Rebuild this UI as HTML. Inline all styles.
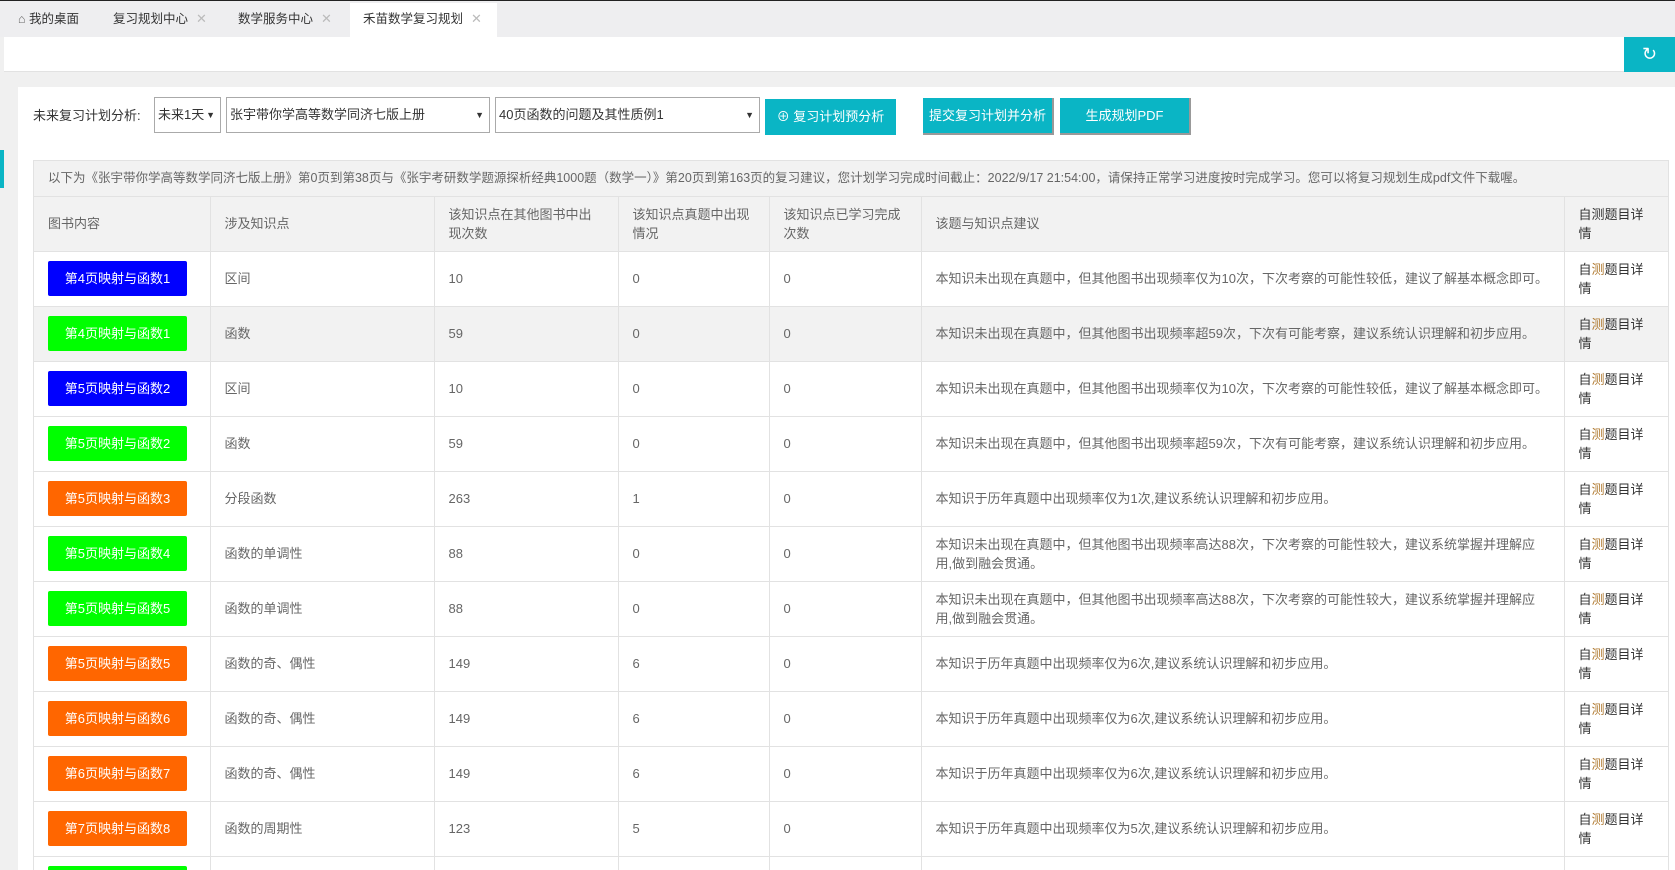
<!DOCTYPE html>
<html style="height:870px;overflow:hidden"><head><meta charset="utf-8"><style>
*{box-sizing:border-box;margin:0;padding:0}
body{width:1675px;height:870px;overflow:hidden;background:#f0f0f0;font-family:"Liberation Sans","Noto Sans CJK SC",sans-serif;font-size:13px;color:#333;position:relative}
.topline{position:absolute;left:0;top:0;width:1675px;height:1px;background:#222}
.tabs{position:absolute;top:1px;left:0;width:1675px;height:36px;background:#eeeef0}
.tab{position:absolute;top:2px;height:34px;line-height:32px;font-size:12.5px;color:#333}
.tab .x{color:#bbb;margin-left:8px;font-size:13px}
.tab.act{background:#fff}
.bar{position:absolute;top:37px;left:4px;width:1671px;height:35px;background:#fff;border-bottom:1px solid #e2e2e2}
.refresh{position:absolute;top:37px;left:1624px;width:51px;height:35px;background:#0ab5c5;color:#fff;text-align:center;line-height:35px;font-size:18px}
.panel{position:absolute;left:18px;top:87px;width:1657px;height:783px;background:#fff}
.lbl{position:absolute;left:33px;top:106px;font-size:13px;line-height:20px}
.sel{position:absolute;top:97px;height:36px;border:1px solid #aaa;background:#fff;line-height:34px;padding-left:3px;font-size:13px}
.sel:after{content:"▼";position:absolute;right:5px;top:0;font-size:9px}
.btn{position:absolute;top:99px;height:36px;background:#0ab5c5;color:#fff;text-align:center;line-height:36px;font-size:13px}
.btn.b{border-right:2px solid #999;border-bottom:2px solid #999;top:98px;height:37px}
.side{position:absolute;left:0;top:150px;width:4px;height:38px;background:#0ab5c5}
.tbl{position:absolute;left:33px;top:160px;width:1636px;height:710px;overflow:hidden;border:1px solid #e2e2e2;border-bottom:none}
.info{height:36px;background:#f2f2f2;line-height:35px;padding-left:14px;color:#666;font-size:12.5px;border-bottom:1px solid #e2e2e2;white-space:nowrap;overflow:hidden}
table{border-collapse:collapse;table-layout:fixed;width:1635px}
td{border-right:1px solid #e2e2e2;border-bottom:1px solid #e2e2e2;padding:0 14px;color:#666;vertical-align:middle;line-height:19px;height:55px}
td:last-child{border-right:none;color:#333}
tr.h td{background:#f2f2f2;height:54px}
tr.s td{background:#f2f2f2}
.pb{display:block;width:139px;height:35px;line-height:35px;text-align:center;color:#fff;border-radius:2px;font-size:13px}
.bl{background:#0000ff}.gr{background:#00ff00}.or{background:#ff6600}
.c{color:#b07a30}
</style></head><body>
<div class="topline"></div>
<div class="tabs">
<div class="tab" style="left:18px;width:90px"><span style="color:#666">⌂</span> 我的桌面</div>
<div class="tab" style="left:113px">复习规划中心<span class="x">✕</span></div>
<div class="tab" style="left:238px">数学服务中心<span class="x">✕</span></div>
<div class="tab act" style="left:350px;width:147px;padding-left:13px">禾苗数学复习规划<span class="x">✕</span></div>
</div>
<div class="bar"></div>
<div class="refresh">↻</div>
<div class="panel"></div>
<div class="side"></div>
<div class="lbl">未来复习计划分析:</div>
<div class="sel" style="left:154px;width:67px">未来1天</div>
<div class="sel" style="left:226px;width:264px">张宇带你学高等数学同济七版上册</div>
<div class="sel" style="left:495px;width:265px">40页函数的问题及其性质例1</div>
<div class="btn" style="left:765px;width:131px">⊕ 复习计划预分析</div>
<div class="btn b" style="left:923px;width:131px">提交复习计划并分析</div>
<div class="btn b" style="left:1060px;width:131px">生成规划PDF</div>
<div class="tbl">
<div class="info">以下为《张宇带你学高等数学同济七版上册》第0页到第38页与《张宇考研数学题源探析经典1000题（数学一）》第20页到第163页的复习建议，您计划学习完成时间截止：2022/9/17 21:54:00，请保持正常学习进度按时完成学习。您可以将复习规划生成pdf文件下载喔。</div>
<table>
<colgroup><col style="width:176px"><col style="width:224px"><col style="width:184px"><col style="width:151px"><col style="width:152px"><col style="width:643px"><col></colgroup>
<tr class="h"><td>图书内容</td><td>涉及知识点</td><td>该知识点在其他图书中出现次数</td><td>该知识点真题中出现情况</td><td>该知识点已学习完成次数</td><td>该题与知识点建议</td><td>自测题目详情</td></tr>
<tr><td><span class="pb bl">第4页映射与函数1</span></td><td>区间</td><td>10</td><td>0</td><td>0</td><td>本知识未出现在真题中，但其他图书出现频率仅为10次，下次考察的可能性较低，建议了解基本概念即可。</td><td>自<span class="c">测</span>题目详情</td></tr>
<tr class="s"><td><span class="pb gr">第4页映射与函数1</span></td><td>函数</td><td>59</td><td>0</td><td>0</td><td>本知识未出现在真题中，但其他图书出现频率超59次，下次有可能考察，建议系统认识理解和初步应用。</td><td>自<span class="c">测</span>题目详情</td></tr>
<tr><td><span class="pb bl">第5页映射与函数2</span></td><td>区间</td><td>10</td><td>0</td><td>0</td><td>本知识未出现在真题中，但其他图书出现频率仅为10次，下次考察的可能性较低，建议了解基本概念即可。</td><td>自<span class="c">测</span>题目详情</td></tr>
<tr><td><span class="pb gr">第5页映射与函数2</span></td><td>函数</td><td>59</td><td>0</td><td>0</td><td>本知识未出现在真题中，但其他图书出现频率超59次，下次有可能考察，建议系统认识理解和初步应用。</td><td>自<span class="c">测</span>题目详情</td></tr>
<tr><td><span class="pb or">第5页映射与函数3</span></td><td>分段函数</td><td>263</td><td>1</td><td>0</td><td>本知识于历年真题中出现频率仅为1次,建议系统认识理解和初步应用。</td><td>自<span class="c">测</span>题目详情</td></tr>
<tr><td><span class="pb gr">第5页映射与函数4</span></td><td>函数的单调性</td><td>88</td><td>0</td><td>0</td><td>本知识未出现在真题中，但其他图书出现频率高达88次，下次考察的可能性较大，建议系统掌握并理解应用,做到融会贯通。</td><td>自<span class="c">测</span>题目详情</td></tr>
<tr><td><span class="pb gr">第5页映射与函数5</span></td><td>函数的单调性</td><td>88</td><td>0</td><td>0</td><td>本知识未出现在真题中，但其他图书出现频率高达88次，下次考察的可能性较大，建议系统掌握并理解应用,做到融会贯通。</td><td>自<span class="c">测</span>题目详情</td></tr>
<tr><td><span class="pb or">第5页映射与函数5</span></td><td>函数的奇、偶性</td><td>149</td><td>6</td><td>0</td><td>本知识于历年真题中出现频率仅为6次,建议系统认识理解和初步应用。</td><td>自<span class="c">测</span>题目详情</td></tr>
<tr><td><span class="pb or">第6页映射与函数6</span></td><td>函数的奇、偶性</td><td>149</td><td>6</td><td>0</td><td>本知识于历年真题中出现频率仅为6次,建议系统认识理解和初步应用。</td><td>自<span class="c">测</span>题目详情</td></tr>
<tr><td><span class="pb or">第6页映射与函数7</span></td><td>函数的奇、偶性</td><td>149</td><td>6</td><td>0</td><td>本知识于历年真题中出现频率仅为6次,建议系统认识理解和初步应用。</td><td>自<span class="c">测</span>题目详情</td></tr>
<tr><td><span class="pb or">第7页映射与函数8</span></td><td>函数的周期性</td><td>123</td><td>5</td><td>0</td><td>本知识于历年真题中出现频率仅为5次,建议系统认识理解和初步应用。</td><td>自<span class="c">测</span>题目详情</td></tr>
<tr><td style="vertical-align:top;padding-top:9px"><span class="pb gr">第7页映射与函数9</span></td><td></td><td></td><td></td><td></td><td></td><td></td></tr>
</table>
</div>
</body></html>
